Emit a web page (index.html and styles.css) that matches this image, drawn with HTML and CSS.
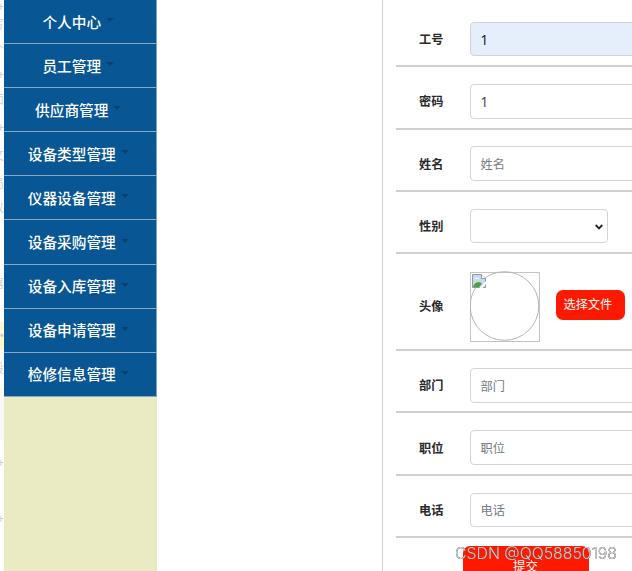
FILE: index.html
```html
<!DOCTYPE html>
<html lang="zh-CN">
<head>
<meta charset="utf-8">
<title>员工管理</title>
<link rel="stylesheet" href="styles.css">
</head>
<body>
<div class="page">
  <div class="edge">
    <span class="h14">+</span><span class="h22">写</span><span class="h28">个</span><span class="h22">+</span><span class="h28">面</span><span class="h28">+</span><span class="h28">文</span><span class="h28">局</span><span class="h22">以</span><span class="h102 low">器</span><span class="h28 hot">•</span><span class="h38">设</span><span class="h52 shade"></span><span class="h46">+</span><span class="h66">+</span>
  </div>
  <nav class="sidebar">
    <a class="item">个人中心<i class="caret"></i></a>
    <a class="item">员工管理<i class="caret"></i></a>
    <a class="item">供应商管理<i class="caret"></i></a>
    <a class="item">设备类型管理<i class="caret"></i></a>
    <a class="item">仪器设备管理<i class="caret"></i></a>
    <a class="item">设备采购管理<i class="caret"></i></a>
    <a class="item">设备入库管理<i class="caret"></i></a>
    <a class="item">设备申请管理<i class="caret"></i></a>
    <a class="item">检修信息管理<i class="caret"></i></a>
  </nav>
  <form class="panel">
    <div class="row"><label>工号</label><div class="field filled auto">1</div></div>
    <div class="row"><label>密码</label><div class="field filled">1</div></div>
    <div class="row"><label>姓名</label><div class="field">姓名</div></div>
    <div class="row"><label>性别</label><div class="field select"><svg width="8" height="6" viewBox="0 0 8 6"><path d="M0.7 1 4 4.4 7.3 1" fill="none" stroke="#222" stroke-width="1.8"/></svg></div></div>
    <div class="row photo"><label>头像</label>
      <svg class="avatar" width="71" height="71" viewBox="0 0 71 71">
        <rect x="0.5" y="1.5" width="69" height="69" fill="none" stroke="#c4c4c4"/>
        <circle cx="34.500" cy="35" r="34.300" fill="none" stroke="#b5b5b5"/>
        <path d="M2.500 3.500h9l4 4v9h-13z" fill="#c6d8f2" stroke="#929a9c"/>
        <path d="M11.500 3.500v4h4" fill="#fff" stroke="#929a9c"/>
        <path d="M4 8q1-2 3-1.500q2 0 2 1.500z" fill="#fff"/>
        <path d="M3 16q1-4 5-5q3 0 4 2l-3 3z" fill="#4ca23b"/>
        <path d="M9 17.500 16.500 9.500v3L12 17.500z" fill="#fff"/>
      </svg>
      <span class="file">选择文件</span>
    </div>
    <div class="row"><label>部门</label><div class="field">部门</div></div>
    <div class="row"><label>职位</label><div class="field">职位</div></div>
    <div class="row"><label>电话</label><div class="field">电话</div></div>
    <div class="submit">提交</div>
  </form>
</div>
<svg class="mark" width="170" height="24"><text x="2" y="17" textLength="162" lengthAdjust="spacingAndGlyphs">CSDN @QQ58850198</text></svg>
</body>
</html>
```
FILE: styles.css
```css
* { box-sizing: border-box; }
body {
  margin: 0;
  height: 571px;
  overflow: hidden;
  position: relative;
  background: #fff;
  font-family: "Noto Sans", "Noto Sans CJK SC", sans-serif;
}
.page { display: flex; height: 571px; overflow: hidden; }
.edge {
  width: 4px;
  flex: none;
  display: flex;
  flex-direction: column;
  align-items: flex-end;
  overflow: hidden;
  color: #d0d0d5;
  font-size: 12px;
}
.edge span { display: flex; flex: none; align-items: center; justify-content: flex-end; width: 14px; line-height: 1; }
.h14 { height: 14px; }
.h22 { height: 22px; }
.h28 { height: 28px; }
.h38 { height: 38px; }
.h46 { height: 46px; }
.h52 { height: 52px; }
.h66 { height: 66px; }
.h102 { height: 102px; }
.edge .low { padding-top: 25px; }
.edge .hot { background: #fdf7d0; color: #cfc9c0; }
.edge .shade { background: #f8f8f8; }
.sidebar { width: 152.5px; flex: none; background: #ebebc3; }
.item {
  display: flex;
  align-items: center;
  justify-content: center;
  height: 44.1px;
  padding: 0 3px 1px 0;
  background: #085693;
  border-bottom: 1px solid #86a8c4;
  border-right: 1px solid #7ea3c1;
  color: #fff;
  font-size: 14.67px;
  font-weight: 500;
  white-space: nowrap;
}
.caret {
  margin-left: 5px;
  margin-top: -2px;
  border: 4px solid transparent;
  border-top-color: #084270;
  border-bottom: 0;
}
.panel {
  flex: none;
  width: 300px;
  height: 600px;
  margin: -4px 0 0 225.5px;
  padding: 8px 0 0 13px;
  border: 1px solid #d2d2d2;
  border-radius: 5px;
}
.row {
  display: flex;
  align-items: center;
  height: 62.3px;
  padding: 8px 0 0 23px;
  border-bottom: 2px solid #d0d0d0;
  font-size: 12.200px;
}
.row label { width: 50.500px; flex: none; color: #2a2a2a; font-weight: 700; }
.field {
  display: flex;
  align-items: center;
  width: 260px;
  height: 34.5px;
  flex: none;
  padding: 1px 10px 0;
  border: 1px solid #d2d4d7;
  border-radius: 4px;
  color: #737b83;
}
.filled { color: #454950; font-size: 13.500px; }
.auto { background: #e5effc; color: #222; }
.select { width: 138.5px; justify-content: flex-end; padding-right: 4px; }
.photo { height: 97px; }
.avatar { flex: none; margin: 1px 0 0 0; }
.file {
  flex: none;
  width: 69px;
  height: 30px;
  margin: -2px 0 0 15px;
  padding-left: 8px;
  line-height: 30px;
  background: #ff1900;
  border-radius: 7px;
  color: #fff;
}
.submit {
  width: 126px;
  height: 40px;
  margin: 8px 0 0 66.5px;
  border-radius: 7px;
  background: #ff1900;
  color: #fff;
  font-size: 12.500px;
  line-height: 41px;
  text-align: center;
}
.mark {
  position: absolute;
  left: 453px;
  top: 542px;
  font: 300 15.500px Inter, sans-serif;
  fill: rgba(255, 255, 255, 0.75);
  filter: drop-shadow(0.5px 0.5px 0.3px #222) drop-shadow(0 0 0.3px #777);
}
```
